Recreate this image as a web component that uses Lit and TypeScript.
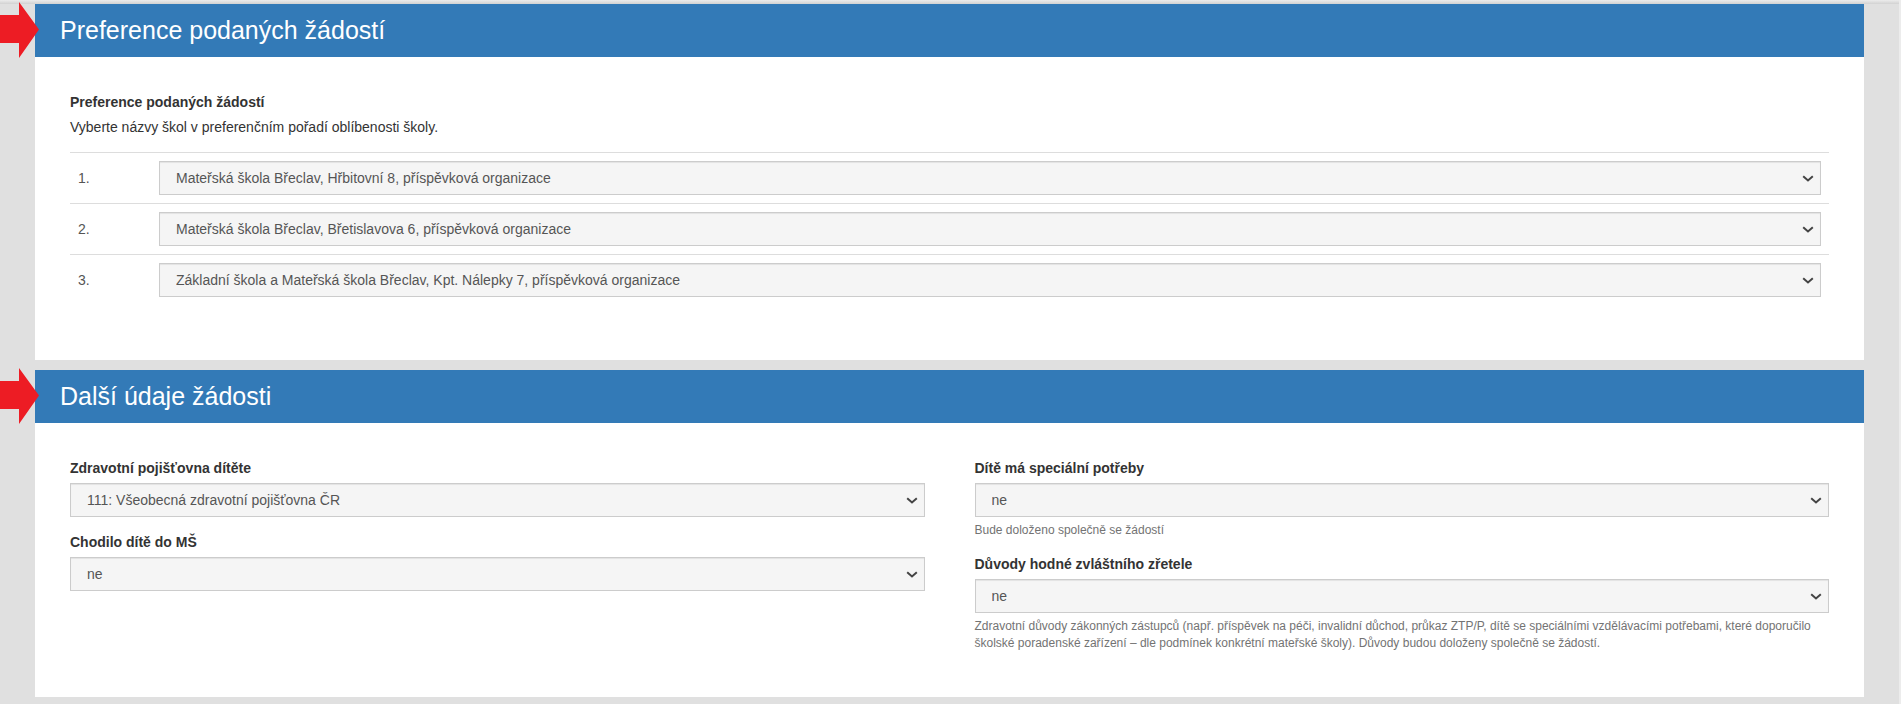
import { LitElement, html, css } from "lit";
import { customElement } from "lit/decorators.js";

const arrow = html`<svg class="arrow" viewBox="0 0 39 56" width="39" height="56" aria-hidden="true"><polygon points="0,13 19,13 19,0 39,27.5 19,56 19,41 0,41" fill="#ed1c24"></polygon></svg>`;

const schools = [
  "Mateřská škola Břeclav, Hřbitovní 8, příspěvková organizace",
  "Mateřská škola Břeclav, Břetislavova 6, příspěvková organizace",
  "Základní škola a Mateřská škola Břeclav, Kpt. Nálepky 7, příspěvková organizace",
];

@customElement("app-root")
export class AppRoot extends LitElement {
  static styles = css`
    :host {
      display: block;
      min-height: 704px;
      background: #e0e0e0;
      font-family: "Liberation Sans", Arial, sans-serif;
      font-size: 14px;
      line-height: 20px;
      color: #333;
      overflow: hidden;
      box-sizing: border-box;
      border-right: 2px solid #ececec;
    }
    .topline {
      height: 4px;
      background: linear-gradient(#ececec, #d2d2d2);
    }
    .page {
      display: flex;
      flex-direction: column;
      gap: 10px;
      margin: 0 35px 0 35px;
    }
    .panel {
      background: #fff;
      position: relative;
    }
    .arrow {
      position: absolute;
      left: -35px;
      top: -2px;
      z-index: 1;
      overflow: visible;
    }
    .head {
      background: #337ab7;
      color: #fff;
      height: 53px;
      padding-left: 25px;
      font-size: 25px;
      line-height: 53px;
    }
    .body {
      padding: 35px 35px 0;
    }
    .first { height: 356px; }
    .second { height: 327px; }
    label, .label {
      display: block;
      font-weight: bold;
      margin: 0;
      height: 20px;
    }
    .desc { margin-top: 5px; height: 20px; }
    .rows { margin-top: 15px; border-top: 1px solid #ddd; }
    .row {
      display: grid;
      grid-template-columns: 89px 1fr;
      align-items: center;
      height: 50px;
      padding-right: 8px;
      border-bottom: 1px solid #ddd;
    }
    .row:last-child { border-bottom: 0; }
    .num { padding-left: 8px; color: #555; }
    .select { position: relative; }
    select {
      display: block;
      width: 100%;
      height: 34px;
      padding: 6px 30px 6px 16px;
      border: 1px solid #ccc;
      border-radius: 0;
      background: #f5f5f5;
      color: #555;
      font: inherit;
      box-sizing: border-box;
      box-shadow: inset 0 1px 1px rgba(0,0,0,.075);
      appearance: none;
      -webkit-appearance: none;
    }
    .chev {
      position: absolute;
      right: 7px;
      top: 14px;
      width: 12px;
      height: 7px;
      pointer-events: none;
    }
    .cols {
      display: grid;
      grid-template-columns: 1fr 1fr;
      column-gap: 50px;
    }
    .field { margin-bottom: 15px; }
    .field label { margin-bottom: 5px; }
    .help {
      font-size: 12px;
      line-height: 17px;
      color: #737373;
      margin-top: 5px;
    }
  `;

  private sel(value: string) {
    return html`<div class="select"><select><option>${value}</option></select><svg class="chev" viewBox="0 0 12 7" aria-hidden="true"><path d="M1.2 1.2 6 5.4 10.8 1.2" fill="none" stroke="#444" stroke-width="2"></path></svg></div>`;
  }

  render() {
    return html`
      <div class="topline"></div>
      <div class="page">
        <section class="panel first">
          ${arrow}
          <div class="head">Preference podaných žádostí</div>
          <div class="body">
            <div class="label">Preference podaných žádostí</div>
            <div class="desc">Vyberte názvy škol v preferenčním pořadí oblíbenosti školy.</div>
            <div class="rows">
              ${schools.map(
                (s, i) => html`<div class="row"><div class="num">${i + 1}.</div>${this.sel(s)}</div>`
              )}
            </div>
          </div>
        </section>
        <section class="panel second">
          ${arrow}
          <div class="head">Další údaje žádosti</div>
          <div class="body cols">
            <div>
              <div class="field">
                <label>Zdravotní pojišťovna dítěte</label>
                ${this.sel("111: Všeobecná zdravotní pojišťovna ČR")}
              </div>
              <div class="field">
                <label>Chodilo dítě do MŠ</label>
                ${this.sel("ne")}
              </div>
            </div>
            <div>
              <div class="field">
                <label>Dítě má speciální potřeby</label>
                ${this.sel("ne")}
                <div class="help">Bude doloženo společně se žádostí</div>
              </div>
              <div class="field">
                <label>Důvody hodné zvláštního zřetele</label>
                ${this.sel("ne")}
                <div class="help">Zdravotní důvody zákonných zástupců (např. příspěvek na péči, invalidní důchod, průkaz ZTP/P, dítě se speciálními vzdělávacími potřebami, které doporučilo školské poradenské zařízení – dle podmínek konkrétní mateřské školy). Důvody budou doloženy společně se žádostí.</div>
              </div>
            </div>
          </div>
        </section>
      </div>
    `;
  }
}
